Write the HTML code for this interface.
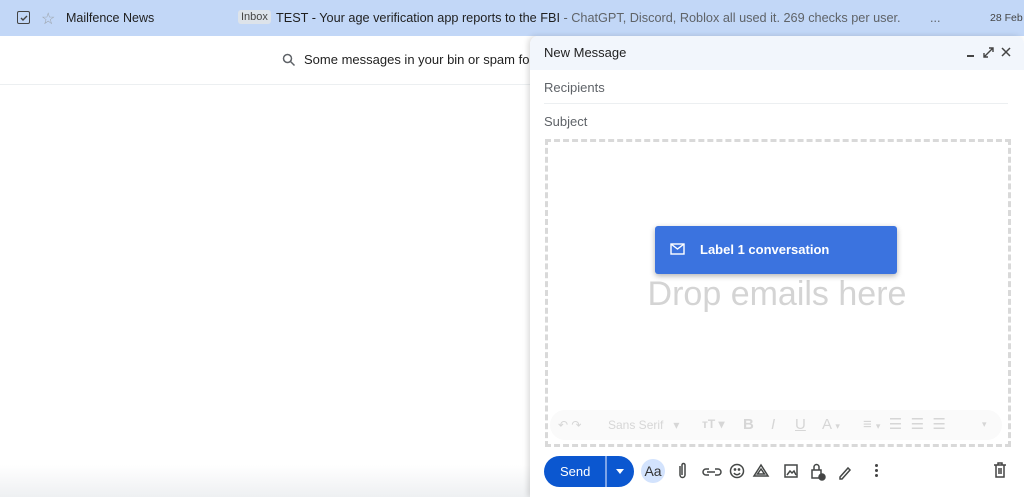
<!DOCTYPE html>
<html><head><style>
*{box-sizing:border-box;margin:0;padding:0}
body{width:1024px;height:497px;overflow:hidden;background:#fff;font-family:"Liberation Sans",Arial,sans-serif;position:relative}
.row{position:absolute;left:0;top:0;width:1024px;height:36px;background:#c2d7f7;font-size:12.5px;color:#1f1f1f;white-space:nowrap}
.abs{position:absolute;white-space:nowrap}
.gray{color:#5f6368}
.tb{position:absolute;color:#d6d6d6;font-size:12px;white-space:nowrap}
</style></head><body>
<div class="row">
 <div class="abs" style="left:17px;top:11px;width:13px;height:13px;border:1.5px solid #444;border-radius:2px"></div>
 <svg class="abs" style="left:19px;top:13px" width="10" height="10" viewBox="0 0 10 10"><path d="M2 5l2 2 4-4" stroke="#444" stroke-width="1.4" fill="none"/></svg>
 <div class="abs" style="left:41px;top:9px;color:#9aa0a6;font-size:16px">☆</div>
 <div class="abs" style="left:66px;top:11px;font-size:12.5px">Mailfence News</div>
 <div class="abs" style="left:238px;top:10px;background:#dde3ea;color:#444;font-size:11px;padding:1px 3px;border-radius:3px">Inbox</div>
 <div class="abs" style="left:276px;top:11px;font-size:12.7px">TEST - Your age verification app reports to the FBI <span class="gray">- ChatGPT, Discord, Roblox all used it. 269 checks per user.</span></div>
 <div class="abs gray" style="left:930px;top:11px">...</div>
 <div class="abs" style="left:990px;top:12px;font-size:10.5px;color:#444">28 Feb</div>
</div>
<svg class="abs" style="left:282px;top:53px" width="14" height="14" viewBox="0 0 14 14"><circle cx="5.5" cy="5.5" r="4" stroke="#5f6368" stroke-width="1.5" fill="none"/><path d="M8.5 8.5l4 4" stroke="#5f6368" stroke-width="1.5"/></svg>
<div class="abs" style="left:304px;top:52px;font-size:13px;color:#1f1f1f">Some messages in your bin or spam folder</div>
<div class="abs" style="left:0;top:84px;width:530px;height:1px;background:#eceff1"></div>
<div class="abs" style="left:0;top:465px;width:1024px;height:32px;background:linear-gradient(#fff0,#eef0f2)"></div>

<div class="abs" style="left:530px;top:36px;width:494px;height:461px;background:#fff;box-shadow:-2px 0 6px rgba(0,0,0,.15);border-radius:8px 8px 0 0;overflow:hidden">
 <div style="height:34px;background:#f2f6fc;position:relative">
  <div class="abs" style="left:14px;top:9px;font-size:13px;color:#1f1f1f">New Message</div>
  <div class="abs" style="left:437px;top:19px;width:7px;height:2px;background:#444"></div>
  <svg class="abs" style="left:453px;top:11px" width="11" height="11" viewBox="0 0 11 11"><path d="M1 10l9-9M6 1h4v4M1 6v4h4" stroke="#444" stroke-width="1.4" fill="none"/></svg>
  <svg class="abs" style="left:471px;top:11px" width="10" height="10" viewBox="0 0 10 10"><path d="M1 1l8 8M9 1l-8 8" stroke="#444" stroke-width="1.5"/></svg>
 </div>
 <div class="abs" style="left:14px;top:44px;font-size:13px;color:#5f6368">Recipients</div>
 <div class="abs" style="left:14px;top:67px;width:464px;height:1px;background:#eceff1"></div>
 <div class="abs" style="left:14px;top:78px;font-size:13px;color:#5f6368">Subject</div>
 <div class="abs" style="left:15px;top:103px;width:466px;height:308px;border:3px dashed #d9d9d9"></div>
 <div class="abs" style="left:0;top:238px;width:494px;text-align:center;font-size:34px;color:#d4d4d4;line-height:40px">Drop emails here</div>
 <div class="abs" style="left:125px;top:190px;width:242px;height:48px;background:#3b73df;border-radius:3px;box-shadow:0 2px 6px rgba(0,0,0,.3)">
  <svg class="abs" style="left:15px;top:17px" width="15" height="12" viewBox="0 0 15 12"><rect x="1" y="1" width="13" height="10" stroke="#fff" stroke-width="1.4" fill="none"/><path d="M1 1l6.5 5L14 1" stroke="#fff" stroke-width="1.4" fill="none"/></svg>
  <div class="abs" style="left:45px;top:16px;color:#fff;font-size:13px;font-weight:bold">Label 1 conversation</div>
 </div>
 <div class="abs" style="left:20px;top:374px;width:452px;height:30px;background:#fafafa;border-radius:15px"></div>
 <div class="tb" style="left:28px;top:382px">↶ ↷</div>
 <div class="tb" style="left:78px;top:382px">Sans Serif &nbsp;&nbsp;▾</div>
 <div class="tb" style="left:172px;top:381px;font-weight:bold">тT ▾</div>
 <div class="tb" style="left:213px;top:380px;font-weight:bold;font-size:15px">B</div>
 <div class="tb" style="left:241px;top:380px;font-style:italic;font-size:15px">I</div>
 <div class="tb" style="left:265px;top:380px;text-decoration:underline;font-size:15px">U</div>
 <div class="tb" style="left:292px;top:380px;font-size:15px">A <span style="font-size:9px">▾</span></div>
 <div class="tb" style="left:333px;top:379px;font-size:15px">≡ <span style="font-size:9px">▾</span>&nbsp; ☰ &nbsp;☰ &nbsp;☰</div>
 <div class="tb" style="left:452px;top:383px;font-size:9px">▾</div>
 <div class="abs" style="left:14px;top:420px;width:90px;height:31px;background:#0b57d0;border-radius:16px;color:#fff;font-size:13px">
  <span class="abs" style="left:16px;top:8px">Send</span>
  <div class="abs" style="left:61px;top:0;width:2px;height:31px;background:#7da4e8"></div>
  <div class="abs" style="left:72px;top:13px;border:4px solid transparent;border-top:5px solid #fff"></div>
 </div>
 <div class="abs" style="left:111px;top:423px;width:24px;height:24px;background:#d3e3fd;border-radius:50%;font-size:14px;color:#333;text-align:center;line-height:24px">Aa</div>
 <svg class="abs" style="left:143px;top:426px" width="180" height="20" viewBox="0 0 180 20" fill="none" stroke="#444746" stroke-width="1.5">
  <path d="M7 4v9a2.5 2.5 0 0 0 5 0V3a1.5 1.5 0 0 0-3 0v10"/>
  <path d="M30 10a3 3 0 0 1 3-3h3M42 7h3a3 3 0 0 1 0 6h-3M36 13h-3a3 3 0 0 1-3-3M34 10h8"/>
  <circle cx="64" cy="9" r="6.5"/><path d="M61 11a3.5 3.5 0 0 0 6 0"/><circle cx="62" cy="7.5" r=".6" fill="#444"/><circle cx="66" cy="7.5" r=".6" fill="#444"/>
  <path d="M88 3l7 11H81z M88 7l3.5 5h-7z"/>
  <rect x="112" y="3" width="12" height="12"/><path d="M114 13l3-4 2 2 2-2 2 4"/>
  <rect x="139" y="8" width="9" height="8"/><path d="M141 8V5a2.5 2.5 0 0 1 5 0v3"/><circle cx="149" cy="15" r="3" fill="#444"/>
  <path d="M167 15l8-9 2 2-8 9h-2z"/>
 </svg>
 <div class="abs" style="left:345px;top:428px;width:3px;height:3px;background:#444;border-radius:50%;box-shadow:0 5px 0 #444,0 10px 0 #444"></div>
 <svg class="abs" style="left:463px;top:426px" width="14" height="16" viewBox="0 0 14 16" fill="none" stroke="#444" stroke-width="1.5"><path d="M1 3h12M5 3V1h4v2M3 3v12h8V3M6 6v6M8 6v6"/></svg>
</div>
</body></html>
